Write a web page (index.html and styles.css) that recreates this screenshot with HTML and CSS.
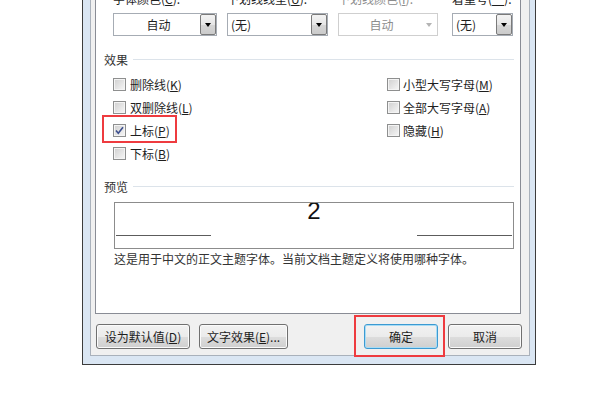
FILE: index.html
```html
<!DOCTYPE html>
<html lang="zh-CN">
<head>
  <meta charset="UTF-8">
  <title>字体</title>
  <link rel="stylesheet" href="styles.css">
</head>
<body>

<div class="window">
  <div class="client">
    <div class="panel">

      <div class="combos">
        <div class="field w1">
          <div class="cap">字体颜色(<u>C</u>):</div>
          <div class="combo"><span class="val center">自动</span><span class="drop"><i></i></span></div>
        </div>
        <div class="field w2">
          <div class="cap">下划线线型(<u>U</u>):</div>
          <div class="combo"><span class="val">(无)</span><span class="drop"><i></i></span></div>
        </div>
        <div class="field w3 disabled">
          <div class="cap">下划线颜色(<u>I</u>):</div>
          <div class="combo"><span class="val center">自动</span><span class="drop"><i></i></span></div>
        </div>
        <div class="field w4">
          <div class="cap">着重号(<u>·</u>):</div>
          <div class="combo"><span class="val">(无)</span><span class="drop"><i></i></span></div>
        </div>
      </div>

      <div class="group"><span>效果</span></div>
      <div class="effects">
        <div class="col">
          <label class="check"><span class="box"></span>删除线(<u>K</u>)</label>
          <label class="check"><span class="box"></span>双删除线(<u>L</u>)</label>
          <label class="check"><span class="box on"><svg width="11" height="11" viewBox="0 0 11 11"><path d="M2 5.5 L4.3 8.3 L9 2.2" fill="none" stroke="#3d4f8e" stroke-width="1.6"/></svg></span>上标(<u>P</u>)</label>
          <label class="check"><span class="box"></span>下标(<u>B</u>)</label>
        </div>
        <div class="col">
          <label class="check"><span class="box"></span>小型大写字母(<u>M</u>)</label>
          <label class="check"><span class="box"></span>全部大写字母(<u>A</u>)</label>
          <label class="check"><span class="box"></span>隐藏(<u>H</u>)</label>
        </div>
      </div>

      <div class="group preview-title"><span>预览</span></div>
      <div class="preview">
        <span class="rule"></span>
        <span class="sup">2</span>
        <span class="rule"></span>
      </div>
      <p class="note">这是用于中文的正文主题字体。当前文档主题定义将使用哪种字体。</p>

    </div>

    <div class="buttons">
      <button class="btn b-default">设为默认值(<u>D</u>)</button>
      <button class="btn b-effects">文字效果(<u>E</u>)...</button>
      <button class="btn b-ok">确定</button>
      <button class="btn b-cancel">取消</button>
    </div>
  </div>
</div>

<div class="mark mark-sup"></div>
<div class="mark mark-ok"></div>

</body>
</html>
```

FILE: styles.css
```css
body {
  margin: 0;
  background: #fff;
  font-family: "Noto Sans CJK SC", "Microsoft YaHei", sans-serif;
  font-size: 12px;
  color: #1e1e1e;
  position: relative;
}
u {
  text-decoration: underline;
  text-underline-offset: 1px;
}
.window {
  box-sizing: border-box;
  width: 454px;
  margin: -9px 0 0 82px;
  border: 1px solid #3c3c3c;
  border-top: none;
  background: #dae6f3;
  padding: 0 5px 8px 7px;
}
.client {
  background: #f0f0f0;
  border: 1px solid #a9b1bb;
  border-top: none;
  padding-bottom: 6px;
}
.panel {
  background: #fff;
  border: 1px solid #898c95;
  border-top: none;
  margin: 0 8px 0 4px;
  padding-bottom: 47px;
}

/* combo boxes */
.combos {
  display: flex;
  padding-left: 17px;
}
.field {
  margin-right: 10px;
}
.w1 { width: 104px; }
.w2 { width: 101px; }
.w3 { width: 100px; margin-right: 14px; }
.w4 { width: 61px; margin-right: 0; }
.cap {
  line-height: 15px;
  margin-bottom: 7px;
  white-space: nowrap;
}
.combo {
  box-sizing: border-box;
  display: flex;
  height: 23px;
  border: 1px solid #a6acb4;
  background: #fff;
}
.val {
  flex: 1;
  line-height: 21px;
  padding-left: 3px;
}
.val.center {
  text-align: center;
}
.drop {
  box-sizing: border-box;
  width: 16px;
  border: 1px solid #7a7a7a;
  border-radius: 2px;
  background: linear-gradient(#f3f3f3, #e6e6e6 50%, #d6d6d6 51%, #cbcbcb);
  display: flex;
  align-items: center;
  justify-content: center;
}
.drop i {
  width: 0;
  height: 0;
  border-top: 4px solid #000;
  border-left: 3.5px solid transparent;
  border-right: 3.5px solid transparent;
}
.disabled .cap,
.disabled .val {
  color: #8d8d8d;
}
.disabled .combo {
  border-color: #cfcfcf;
}
.disabled .drop {
  border-color: transparent;
  background: #fff;
}
.disabled .drop i {
  border-top-color: #b4b4b4;
}

/* group headings */
.group {
  display: flex;
  align-items: center;
  margin: 16px 6px 0 0;
  padding-left: 8px;
  line-height: 15px;
  color: #333;
}
.group::after {
  content: "";
  flex: 1;
  height: 1px;
  background: #dce3ea;
  margin-left: 5px;
}
.preview-title {
  margin-top: 14px;
}

/* checkboxes */
.effects {
  display: grid;
  grid-template-columns: 274px auto;
  padding-left: 17px;
  margin-top: 6px;
}
.check {
  display: flex;
  align-items: center;
  height: 23px;
  white-space: nowrap;
}
.box {
  box-sizing: border-box;
  width: 13px;
  height: 13px;
  margin-right: 4px;
  border: 1px solid #8e8f8f;
  box-shadow: inset 0 0 0 1px #f4f4f4;
  background: linear-gradient(135deg, #cfcfcf, #f7f7f7);
  display: flex;
  align-items: center;
  justify-content: center;
}
.col + .col .box {
  margin-right: 3px;
}

/* preview */
.preview {
  box-sizing: border-box;
  width: 400px;
  height: 47px;
  margin: 8px 0 0 18px;
  border: 1px solid #8c8c8c;
  overflow: hidden;
  display: flex;
  justify-content: space-between;
  align-items: flex-start;
  padding: 0 1px;
}
.rule {
  width: 95px;
  height: 1px;
  margin-top: 32px;
  background: #5c5c5c;
}
.sup {
  font-family: "Liberation Sans", sans-serif;
  font-size: 24px;
  line-height: 24px;
  margin-top: -4px;
  color: #111;
}
.note {
  margin: 2px 0 0 18px;
  line-height: 15px;
  color: #333;
}

/* buttons */
.buttons {
  display: flex;
  padding: 10px 7px 0 5px;
}
.btn {
  box-sizing: border-box;
  height: 25px;
  padding: 0;
  font: inherit;
  color: #1e1e1e;
  border: 1px solid #707070;
  border-radius: 3px;
  background: linear-gradient(#f2f2f2, #ebebeb 50%, #dddddd 51%, #cfcfcf);
  box-shadow: inset 0 0 0 1px #fbfbfb;
}
.b-default { width: 94px; }
.b-effects { width: 89px; margin-left: 9px; }
.b-ok {
  width: 74px;
  margin-left: auto;
  border-color: #3c9ad2;
  box-shadow: inset 0 0 0 1px #a8dcf5;
}
.b-cancel { width: 74px; margin-left: 10px; }

/* annotation boxes */
.mark {
  position: absolute;
  box-sizing: border-box;
  border: 2px solid #ee3b3f;
}
.mark-sup {
  left: 102px;
  top: 115px;
  width: 75px;
  height: 28px;
}
.mark-ok {
  left: 354px;
  top: 315px;
  width: 91px;
  height: 42px;
}
```
